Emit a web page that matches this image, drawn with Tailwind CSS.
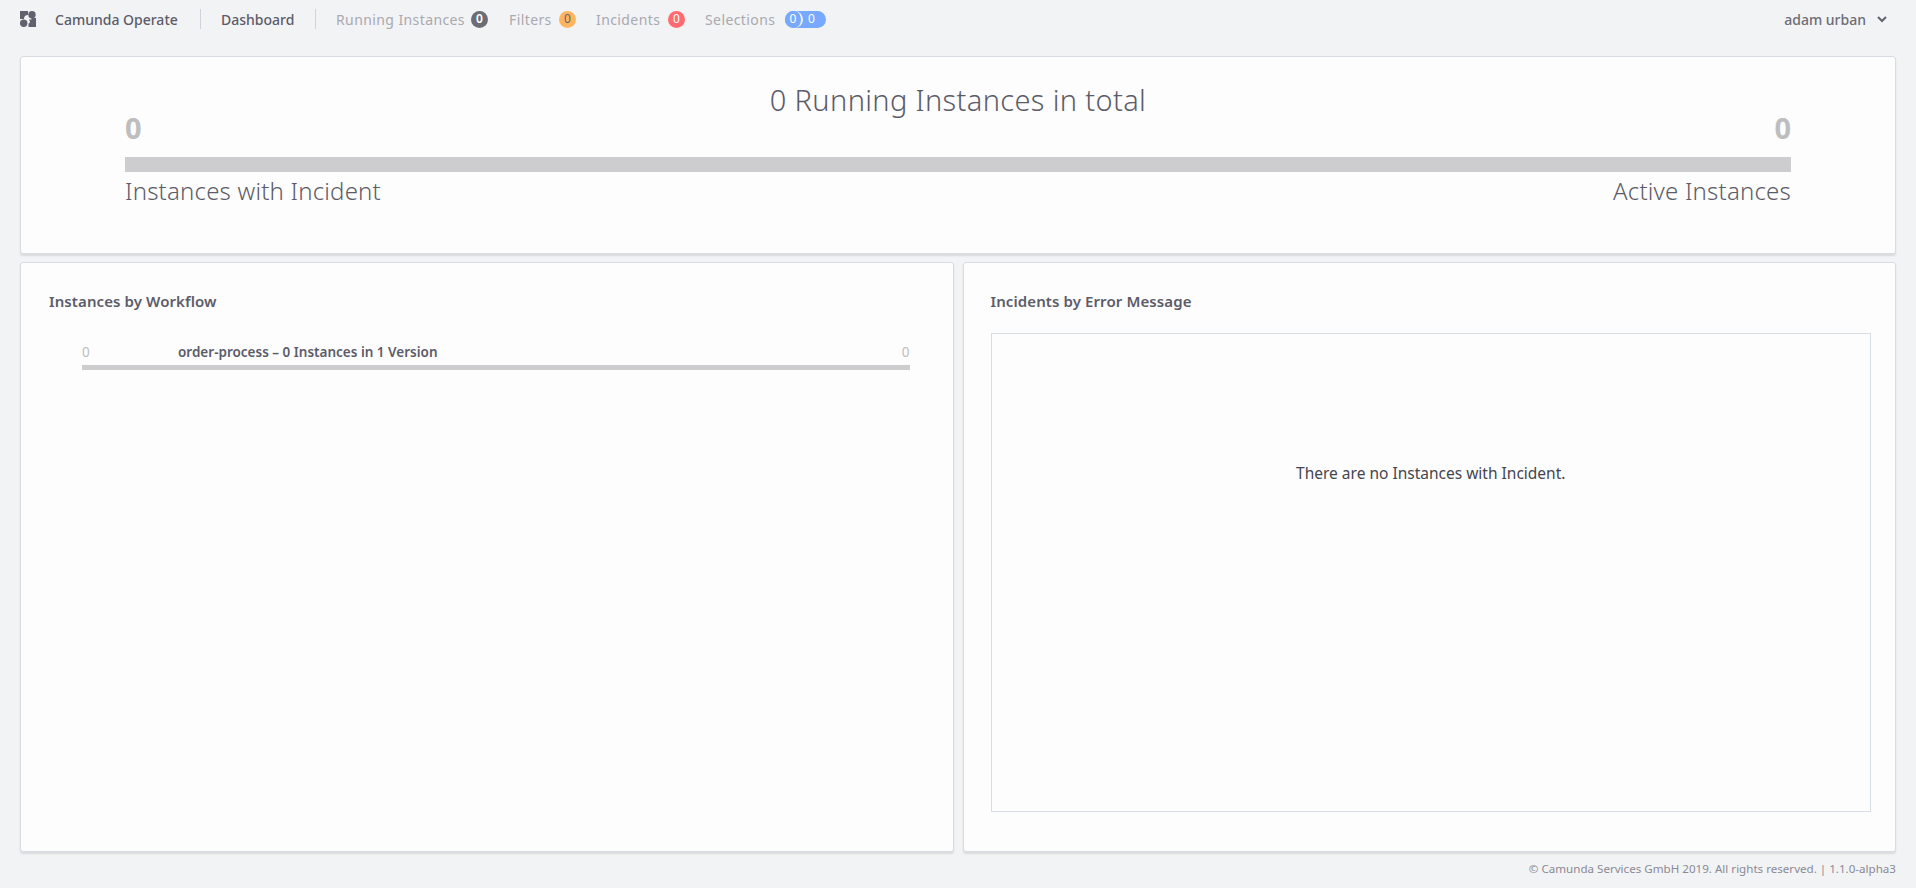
<!DOCTYPE html>
<html lang="en">
<head>
  <meta charset="UTF-8">
  <title>Camunda Operate</title>
  <script src="https://cdn.jsdelivr.net/npm/@tailwindcss/browser@4"></script>
</head>
<body class="bg-[#f2f3f5] h-[888px] w-[1916px] overflow-hidden font-['Noto_Sans',sans-serif] text-[#5c5c69]">
  <!-- Header -->
  <header class="h-[56px] pl-5 pr-5 pb-[18px] flex items-center text-[14px]">
    <svg class="w-[16px] h-[16px] shrink-0" viewBox="0 0 16 16" fill="#62626e">
      <path d="M0 0h8v4a4 4 0 0 0-4 4H0z"/>
      <circle cx="12" cy="3.700" r="3.700"/>
      <circle cx="3.700" cy="12.200" r="3.700"/>
      <path d="M9 8.500h2.500v-1.500H16v9H8.500v-3.500H9a3 3 0 0 0 0-4z"/>
    </svg>
    <span class="ml-[19px] font-medium w-[145px] whitespace-nowrap">Camunda Operate</span>
    <span class="w-px h-[20px] bg-[#d0d3da]"></span>
    <span class="ml-5 font-medium w-[94px] whitespace-nowrap">Dashboard</span>
    <span class="w-px h-[20px] bg-[#d0d3da]"></span>
    <div class="ml-5 flex items-center text-[#a9a9b0] tracking-[0.4px]">
      <span class="w-[135px] whitespace-nowrap">Running Instances</span>
      <span class="w-[17px] h-[17px] rounded-full bg-[#6c6c74] text-white text-[12px] font-semibold tracking-normal flex items-center justify-center">0</span>
      <span class="ml-[21px] w-[50px]">Filters</span>
      <span class="w-[17px] h-[17px] rounded-full bg-[#ffb55f] text-[#62626e] text-[12px] tracking-normal flex items-center justify-center">0</span>
      <span class="ml-[20px] w-[72px]">Incidents</span>
      <span class="w-[17px] h-[17px] rounded-full bg-[#ff6b6f] text-white text-[12px] tracking-normal flex items-center justify-center">0</span>
      <span class="ml-[20px] w-[80px]">Selections</span>
      <div class="relative flex w-[41px] h-[17px] rounded-full bg-[#78a9ff] text-white text-[12px] tracking-normal">
        <span class="absolute left-0 top-0 w-[18px] h-[17px] rounded-full bg-[#78a9ff] border-r-2 border-[#f2f3f5] flex items-center justify-center">0</span>
        <span class="absolute left-[23px] top-0 h-[17px] flex items-center">0</span>
      </div>
    </div>
    <div class="ml-auto flex items-center pr-[9px] text-[#6c6c76] font-medium">
      <span class="whitespace-nowrap">adam urban</span>
      <svg class="ml-[11px] w-[10px] h-[8px]" viewBox="0 0 10 8" fill="none" stroke="#62626e" stroke-width="2"><path d="M1 2l4 4 4-4"/></svg>
    </div>
  </header>

  <main class="px-5">
    <!-- Total instances -->
    <section class="bg-[#fdfdfd] h-[198px] rounded-[3px] border border-[#d8dce3] shadow-[0_2px_2px_rgba(0,0,0,0.1)] px-[104px] pt-[24px]">
      <h1 class="text-center text-[29px] tracking-[0.35px] font-light leading-[38px] h-[38px]">0 Running Instances in total</h1>
      <div class="flex justify-between text-[#bebec0] text-[29px] font-bold leading-[32px] -mt-[7px]">
        <span>0</span>
        <span>0</span>
      </div>
      <div class="h-[15px] bg-[#cdcdcf] mt-[13px]"></div>
      <div class="flex justify-between text-[24px] tracking-[0.2px] font-light leading-[32px] mt-[3px]">
        <span>Instances with Incident</span>
        <span>Active Instances</span>
      </div>
    </section>

    <div class="mt-[8px] grid grid-cols-2 gap-[9px] h-[590px]">
      <!-- Instances by workflow -->
      <section class="bg-[#fdfdfd] rounded-[3px] border border-[#d8dce3] shadow-[0_2px_2px_rgba(0,0,0,0.1)] px-[28px] pt-[28px]">
        <h2 class="text-[15px] tracking-[0.1px] font-semibold leading-[20px]">Instances by Workflow</h2>
        <div class="mt-[31px] ml-[33px] mr-[15px]">
          <div class="flex text-[13.500px] leading-[20px]">
            <span class="w-[96px] text-[#bebec0]">0</span>
            <span class="font-semibold whitespace-nowrap">order-process – 0 Instances in 1 Version</span>
            <span class="ml-auto text-[#bebec0]">0</span>
          </div>
          <div class="h-[5px] bg-[#cdcdcf] mt-[3px]"></div>
        </div>
      </section>

      <!-- Incidents by error message -->
      <section class="bg-[#fdfdfd] rounded-[3px] border border-[#d8dce3] shadow-[0_2px_2px_rgba(0,0,0,0.1)] px-[27px] pt-[28px] flex flex-col">
        <h2 class="text-[15px] tracking-[0.1px] font-semibold leading-[20px]">Incidents by Error Message</h2>
        <div class="mt-[22px] mr-[-3px] h-[479px] border border-[#d8dce3] flex justify-center pt-[127px] text-[15.500px] text-[#45454f] leading-[24px]">
          There are no Instances with Incident.
        </div>
      </section>
    </div>

    <footer class="mt-[8px] text-right text-[11.600px] leading-[18px] text-[#8a8a94]">© Camunda Services GmbH 2019. All rights reserved. | 1.1.0-alpha3</footer>
  </main>
</body>
</html>
